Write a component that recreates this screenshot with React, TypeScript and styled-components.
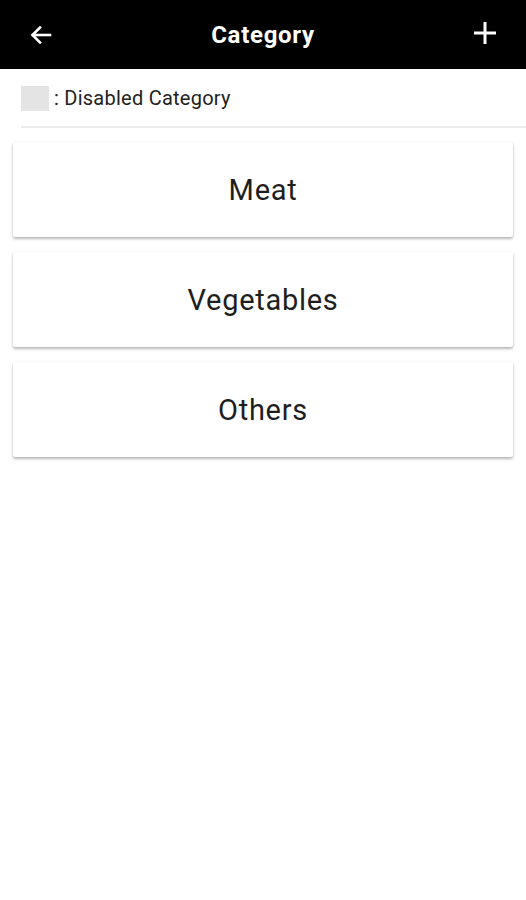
import React from "react";
import styled, { createGlobalStyle } from "styled-components";

const Global = createGlobalStyle`
  html, body { margin: 0; padding: 0; background: #fff; }
  body { font-family: Roboto, "Noto Sans", sans-serif; }
`;

const Page = styled.div`
  width: 526px;
  min-height: 900px;
  background: #fff;
`;

const Toolbar = styled.header`
  height: 69px;
  background: #000;
  display: grid;
  grid-template-columns: 82px 1fr 82px;
  align-items: center;
  color: #fff;
`;

const IconButton = styled.button<{ $dy?: number }>`
  background: none;
  border: 0;
  padding: 0;
  height: 69px;
  display: flex;
  align-items: center;
  justify-content: center;
  color: #fff;
  margin-top: ${(p) => p.$dy ?? 0}px;
`;

const Title = styled.h1`
  margin: 0;
  font-size: 24px;
  font-weight: 700;
  text-align: center;
  letter-spacing: 0.7px;
`;

const Legend = styled.div`
  margin-left: 21px;
  height: 59px;
  display: flex;
  align-items: center;
  gap: 5px;
  border-bottom: 2px solid #ececec;
  box-sizing: border-box;
  padding-top: 1px;
`;

const Swatch = styled.span`
  width: 28px;
  height: 25px;
  background: #e4e4e4;
`;

const LegendText = styled.span`
  font-size: 20px;
  color: #222;
  letter-spacing: 0.25px;
`;

const List = styled.div`
  padding: 14px 13px 0 13px;
  display: flex;
  flex-direction: column;
  gap: 15px;
`;

const Card = styled.div`
  height: 95px;
  background: #fff;
  border-radius: 2px;
  box-shadow: 0 2px 3px rgba(0, 0, 0, 0.28), 0 0 2px rgba(0, 0, 0, 0.08);
  display: flex;
  align-items: center;
  justify-content: center;
  font-size: 29px;
  letter-spacing: 0.7px;
  color: #1e1e1e;
  padding-top: 1px;
  box-sizing: border-box;
`;

const categories = ["Meat", "Vegetables", "Others"];

export default function App() {
  return (
    <Page>
      <Global />
      <Toolbar>
        <IconButton aria-label="back">
          <svg width="24" height="24" viewBox="0 0 24 24" fill="none" stroke="#fff" strokeWidth="2.6" strokeLinecap="square">
            <path d="M21 12H4" />
            <path d="M11 4.5L3.5 12L11 19.5" />
          </svg>
        </IconButton>
        <Title>Category</Title>
        <IconButton aria-label="add" $dy={-4}>
          <svg width="24" height="24" viewBox="0 0 24 24" fill="none" stroke="#fff" strokeWidth="3">
            <path d="M12 1V23" />
            <path d="M1 12H23" />
          </svg>
        </IconButton>
      </Toolbar>
      <Legend>
        <Swatch />
        <LegendText>: Disabled Category</LegendText>
      </Legend>
      <List>
        {categories.map((c) => (
          <Card key={c}>{c}</Card>
        ))}
      </List>
    </Page>
  );
}
